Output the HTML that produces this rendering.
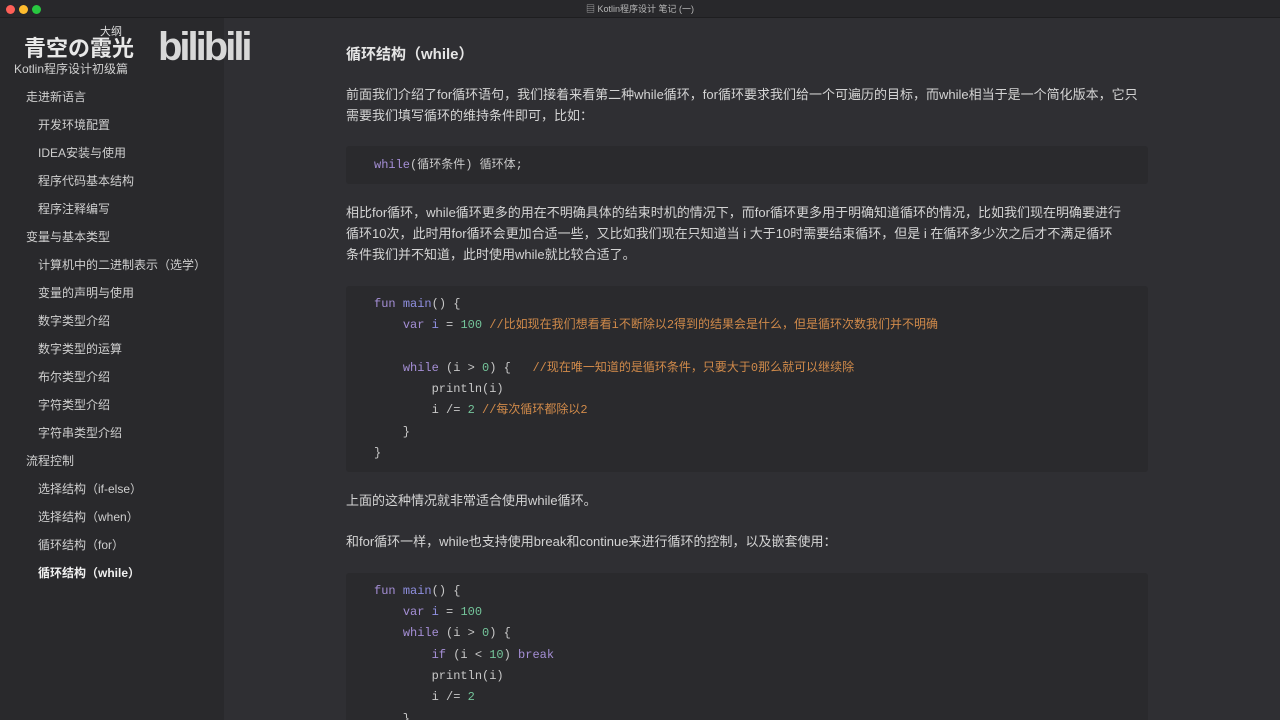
<!DOCTYPE html>
<html><head><meta charset="utf-8">
<style>
*{margin:0;padding:0;box-sizing:border-box}
html,body{width:1280px;height:720px;overflow:hidden}
body{background:#2f2f33;font-family:"Liberation Sans","Noto Sans CJK SC",sans-serif;color:#d0d0d0;position:relative}
#tb{position:absolute;left:0;top:0;width:1280px;height:18px;background:#28282b;border-bottom:1px solid #1e1e20;text-align:center;font-size:9px;color:#b8b8b8;line-height:18px}
.dot{position:absolute;top:5px;width:9px;height:9px;border-radius:50%}
#sb{position:absolute;left:0;top:18px;width:224px;height:702px;background:#29292c}
.it{position:absolute;font-size:12px;color:#cfcfcf;white-space:nowrap}
.l1{left:26px}.l2{left:38px}
#main{position:absolute;left:224px;top:18px;width:1056px;height:702px;overflow:hidden}
.p{position:absolute;left:122px;width:796px;font-size:13px;line-height:21px;color:#d4d4d4}
.code{position:absolute;left:122px;width:802px;background:#2a2a2d;border-radius:3px;font-family:"Liberation Mono","Noto Sans CJK SC",monospace;font-size:12px;line-height:16px;color:#c8c8c8}
.ln{position:absolute;left:28px;white-space:pre;height:16px}
.k{color:#a58fd6}.f{color:#8f8fe0}.n{color:#74c49a}.c{color:#d08a4a}
</style></head><body>
<div id="tb"><span class="dot" style="left:6px;background:#fe5f57"></span><span class="dot" style="left:19px;background:#febc2e"></span><span class="dot" style="left:32px;background:#28c840"></span>▤ Kotlin程序设计 笔记 (一)</div>
<div id="sb">
<div style="position:absolute;left:24px;top:20px;font-size:22px;line-height:22px;font-weight:bold;color:#e8e8e8">青空の霞光</div>
<div style="position:absolute;left:100px;top:9px;font-size:11px;line-height:11px;color:#ddd">大纲</div>
<div style="position:absolute;left:158px;top:9px;font-size:40px;line-height:40px;font-weight:bold;color:#d8d8d8;letter-spacing:-3px">bilibili</div>
<div style="position:absolute;left:14px;top:42px;font-size:12px;color:#cfcfcf">Kotlin程序设计初级篇</div>
<div class="it l1" style="top:70px">走进新语言</div>
<div class="it l2" style="top:98px">开发环境配置</div>
<div class="it l2" style="top:126px">IDEA安装与使用</div>
<div class="it l2" style="top:154px">程序代码基本结构</div>
<div class="it l2" style="top:182px">程序注释编写</div>
<div class="it l1" style="top:210px">变量与基本类型</div>
<div class="it l2" style="top:238px">计算机中的二进制表示（选学）</div>
<div class="it l2" style="top:266px">变量的声明与使用</div>
<div class="it l2" style="top:294px">数字类型介绍</div>
<div class="it l2" style="top:322px">数字类型的运算</div>
<div class="it l2" style="top:350px">布尔类型介绍</div>
<div class="it l2" style="top:378px">字符类型介绍</div>
<div class="it l2" style="top:406px">字符串类型介绍</div>
<div class="it l1" style="top:434px">流程控制</div>
<div class="it l2" style="top:462px">选择结构（if-else）</div>
<div class="it l2" style="top:490px">选择结构（when）</div>
<div class="it l2" style="top:518px">循环结构（for）</div>
<div class="it l2" style="top:546px;font-weight:bold;color:#f0f0f0">循环结构（while）</div>
</div>
<div id="main">
<div class="p" style="top:26px;font-size:15px;font-weight:bold;color:#e6e6e6">循环结构（while）</div>
<div class="p" style="top:66px">前面我们介绍了for循环语句，我们接着来看第二种while循环，for循环要求我们给一个可遍历的目标，而while相当于是一个简化版本，它只需要我们填写循环的维持条件即可，比如：</div>
<div class="code" style="top:128px;height:38px"><div class="ln" style="top:11px"><span class="k">while</span>(循环条件) 循环体;</div></div>
<div class="p" style="top:184px">相比for循环，while循环更多的用在不明确具体的结束时机的情况下，而for循环更多用于明确知道循环的情况，比如我们现在明确要进行<br>循环10次，此时用for循环会更加合适一些，又比如我们现在只知道当 i 大于10时需要结束循环，但是 i 在循环多少次之后才不满足循环<br>条件我们并不知道，此时使用while就比较合适了。</div>
<div class="code" style="top:268px;height:186px">
<div class="ln" style="top:10px"><span class="k">fun</span> <span class="f">main</span>() {</div>
<div class="ln" style="top:31px">    <span class="k">var</span> <span class="f">i</span> = <span class="n">100</span> <span class="c">//比如现在我们想看看i不断除以2得到的结果会是什么，但是循环次数我们并不明确</span></div>
<div class="ln" style="top:74px">    <span class="k">while</span> (i &gt; <span class="n">0</span>) {   <span class="c">//现在唯一知道的是循环条件，只要大于0那么就可以继续除</span></div>
<div class="ln" style="top:95px">        println(i)</div>
<div class="ln" style="top:116px">        i /= <span class="n">2</span> <span class="c">//每次循环都除以2</span></div>
<div class="ln" style="top:138px">    }</div>
<div class="ln" style="top:159px">}</div>
</div>
<div class="p" style="top:472px">上面的这种情况就非常适合使用while循环。</div>
<div class="p" style="top:513px">和for循环一样，while也支持使用break和continue来进行循环的控制，以及嵌套使用：</div>
<div class="code" style="top:555px;height:170px">
<div class="ln" style="top:10px"><span class="k">fun</span> <span class="f">main</span>() {</div>
<div class="ln" style="top:31px">    <span class="k">var</span> <span class="f">i</span> = <span class="n">100</span></div>
<div class="ln" style="top:52px">    <span class="k">while</span> (i &gt; <span class="n">0</span>) {</div>
<div class="ln" style="top:74px">        <span class="k">if</span> (i &lt; <span class="n">10</span>) <span class="k">break</span></div>
<div class="ln" style="top:95px">        println(i)</div>
<div class="ln" style="top:116px">        i /= <span class="n">2</span></div>
<div class="ln" style="top:138px">    }</div>
</div>
</div>
</body></html>
